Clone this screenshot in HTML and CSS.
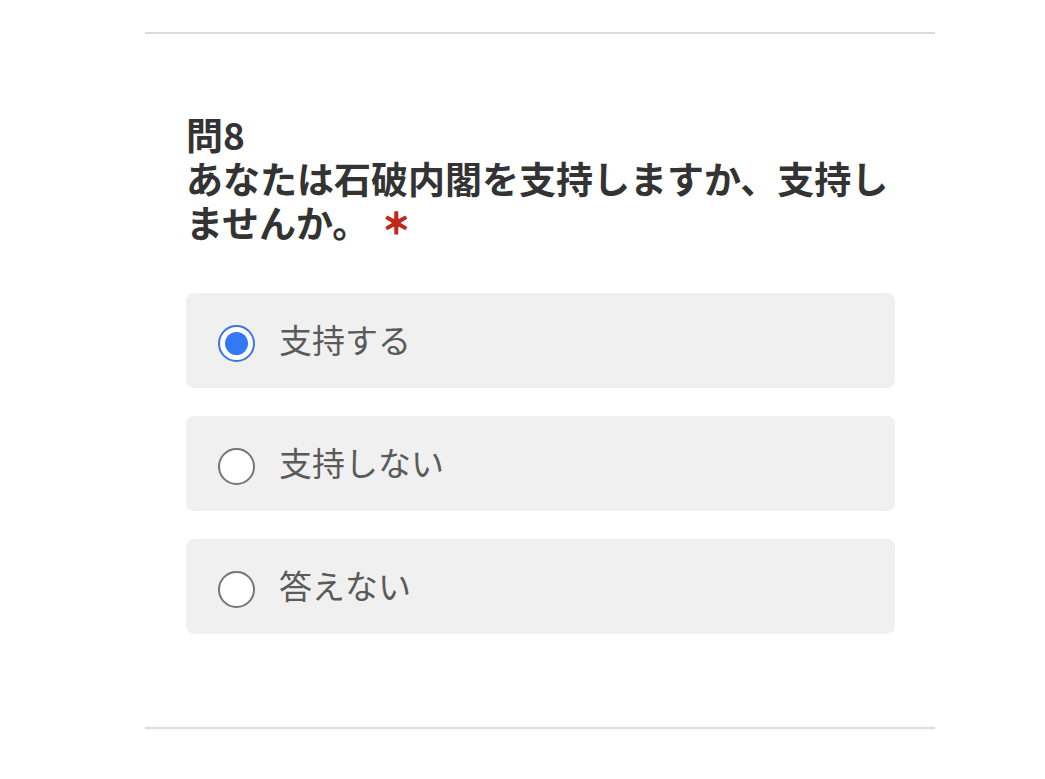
FILE: index.html
```html
<!DOCTYPE html>
<html lang="ja">
<head>
<meta charset="utf-8">
<link rel="stylesheet" href="styles.css">
</head>
<body>
<div class="page">
  <hr class="rule rule-top">
  <section class="question">
    <h2 class="title">問8<br>あなたは石破内閣を支持しますか、支持しませんか。<span class="req">＊</span></h2>
    <div class="options">
      <label class="option">
        <span class="radio checked"><span class="dot"></span></span>
        <span class="label">支持する</span>
      </label>
      <label class="option">
        <span class="radio"></span>
        <span class="label">支持しない</span>
      </label>
      <label class="option">
        <span class="radio"></span>
        <span class="label">答えない</span>
      </label>
    </div>
  </section>
  <hr class="rule rule-bottom">
</div>
</body>
</html>
```
FILE: styles.css
```css
html, body {
  margin: 0;
  padding: 0;
  background: #ffffff;
}
body {
  font-family: "Noto Sans CJK JP", "Noto Sans", sans-serif;
}
.page {
  width: 790px;
  margin-left: 145px;
  padding-top: 32px;
}
.rule {
  margin: 0;
  border: 0;
  height: 2px;
  background: #dcdcdc;
}
.question {
  padding: 78px 40px 0 41px;
}
.title {
  margin: 0;
  font-size: 37px;
  line-height: 44px;
  font-weight: 700;
  color: #333333;
}
.req {
  color: #c0281e;
  margin-left: 13px;
  font-size: 28px;
  line-height: 0;
  font-weight: 700;
  -webkit-text-stroke: 1.6px #c0281e;
  vertical-align: 4px;
}
.options {
  margin-top: 49px;
  display: flex;
  flex-direction: column;
  gap: 28px;
  padding-bottom: 93px;
}
.option {
  display: flex;
  align-items: center;
  height: 95px;
  background: #f0f0f0;
  border-radius: 8px;
  padding-left: 32px;
  box-sizing: border-box;
}
.radio {
  width: 37px;
  height: 37px;
  box-sizing: border-box;
  border: 2.5px solid #767676;
  border-radius: 50%;
  background: #ffffff;
  display: flex;
  align-items: center;
  justify-content: center;
  margin-top: 6px;
  flex: none;
}
.radio.checked {
  border-color: #3a76e4;
}
.dot {
  width: 23px;
  height: 23px;
  border-radius: 50%;
  background: #3478f6;
}
.label {
  margin-left: 24px;
  font-size: 33px;
  color: #5a5a5a;
  line-height: 44px;
  margin-bottom: 3px;
}
```
